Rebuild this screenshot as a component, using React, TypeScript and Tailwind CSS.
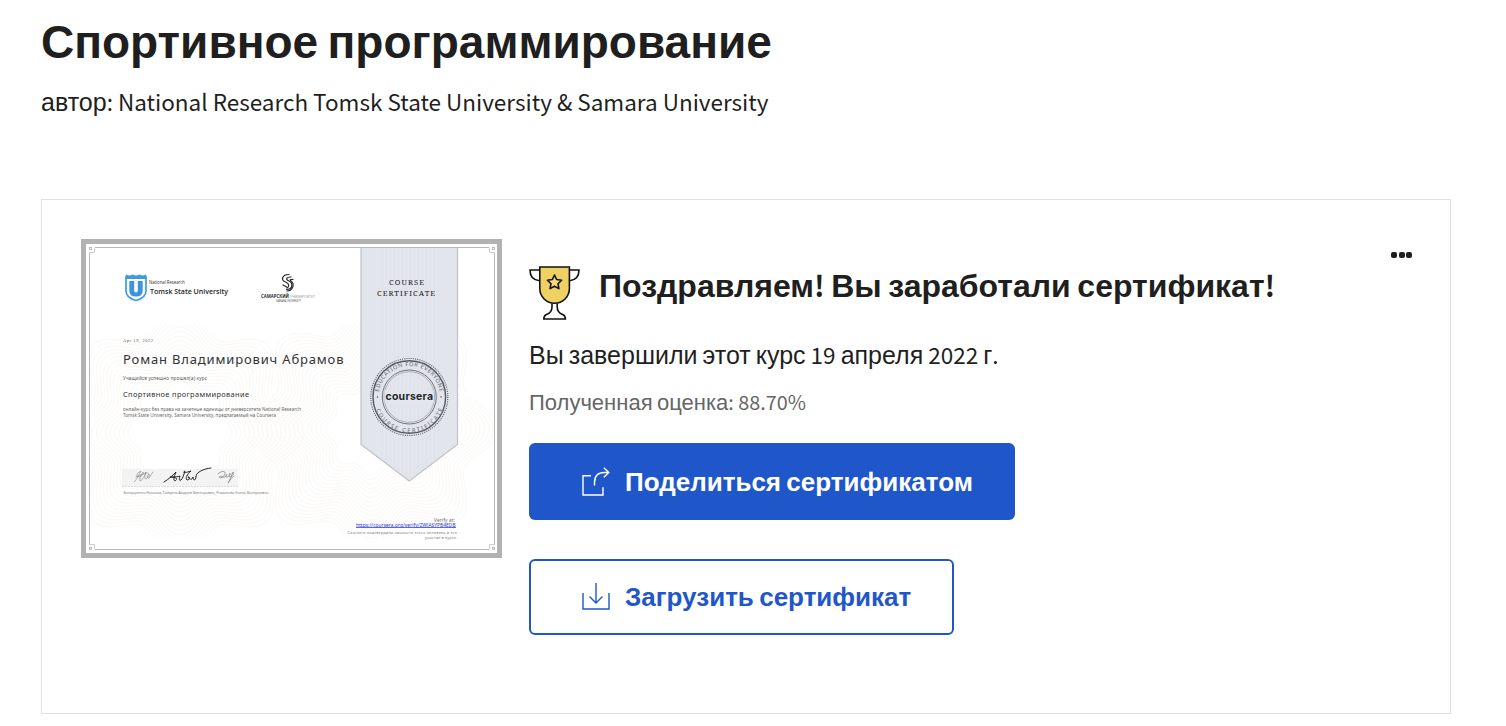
import React from "react";

const LATIN = "font-['Noto_Sans_CJK_SC',sans-serif] text-[0.9em] leading-none";

function Mixed({ text }: { text: string }) {
  const runs = text.match(/[А-Яа-яЁё]+|[^А-Яа-яЁё]+/g) ?? [];
  return (
    <>
      {runs.map((run, i) =>
        /[А-Яа-яЁё]/.test(run) ? (
          <React.Fragment key={i}>{run}</React.Fragment>
        ) : (
          <span key={i} className={LATIN}>
            {run}
          </span>
        ),
      )}
    </>
  );
}

function rosette(cx: number, cy: number, r: number, lobes: number, amp: number) {
  const pts: string[] = [];
  for (let i = 0; i <= 180; i++) {
    const a = (i / 180) * Math.PI * 2;
    const d = r + amp * Math.cos(lobes * a);
    pts.push(`${(cx + d * Math.cos(a)).toFixed(1)} ${(cy + d * Math.sin(a)).toFixed(1)}`);
  }
  return `M${pts.join("L")}Z`;
}

const CONTOURS = [
  ...Array.from({ length: 17 }, (_, i) => rosette(99, 194, 48 + i * 4, 8, 4 + i * 0.5)),
  ...Array.from({ length: 19 }, (_, i) => rosette(290, 190, 42 + i * 4, 8, 4 + i * 0.5)),
];

function Certificate() {
  return (
    <svg width="421" height="319" viewBox="0 0 421 319" className="block shrink-0" fontFamily="'Noto Sans', sans-serif">
      <defs>
        <clipPath id="sheet">
          <rect x="9" y="85" width="405" height="214" />
        </clipPath>
        <path id="arcTop" d="M297.3 158a31 31 0 0 1 62 0" />
        <path id="arcBottom" d="M292.8 158a35.5 35.5 0 0 0 71 0" />
      </defs>
      <rect x="2.5" y="2.5" width="416" height="314" fill="#fff" stroke="#b2b2b2" strokeWidth="5" />
      <g clipPath="url(#sheet)" fill="none" stroke="#fbf9f6" strokeWidth="1">
        {CONTOURS.map((d, i) => (
          <path key={i} d={d} />
        ))}
      </g>
      <path d="M14 8.5H408M413.5 14V306M408 310.5H14M8.5 306V14" fill="none" stroke="#b9b9b9" />
      <path d="M8.5 13.5h5v-5M408.500 8.500v5h5M413.500 305.500h-5v5M13.500 310.500v-5h-5" fill="none" stroke="#cfcfcf" />
      <g fill="none" stroke="#b5b5b5" strokeWidth=".9">
        <rect x="8.500" y="8.500" width="2" height="2" />
        <rect x="411.500" y="8.500" width="2" height="2" />
        <rect x="8.500" y="308.500" width="2" height="2" />
        <rect x="411.500" y="308.500" width="2" height="2" />
      </g>

      <path d="M280 9H376.500V205.500L328.300 242 280 205.500Z" fill="#e2e5ec" />
      <path
        d="M301.500 9V220M305.500 9V223M309.500 9V226M313.500 9V229M317.500 9V232M321.500 9V235M325.500 9V238M329.500 9V239M333.500 9V236M337.500 9V233M341.500 9V230M345.500 9V227M349.500 9V224M353.500 9V221M357.500 9V218"
        stroke="#dde1e9"
        strokeWidth=".8"
      />
      <path d="M280 9V205.500L328.300 242 376.500 205.500V9" fill="none" stroke="#c0c2c6" strokeWidth="1.200" />

      <g fontFamily="'Noto Serif', 'Liberation Serif', serif" fontSize="7.500" fill="#222">
        <text x="308" y="46" textLength="35">COURSE</text>
        <text x="296" y="56.500" textLength="58">CERTIFICATE</text>
      </g>

      <g fill="none" stroke="#55585c">
        <circle cx="328.300" cy="158" r="38.500" strokeWidth="1.100" strokeDasharray="1 1.200" />
        <circle cx="328.300" cy="158" r="36.300" strokeWidth="1.400" />
        <circle cx="328.300" cy="158" r="27" strokeWidth=".8" />
        <circle cx="328.300" cy="158" r="25.300" strokeWidth=".6" stroke="#8b8e92" />
      </g>
      <g fontSize="5.600" fill="#5b5e62">
        <text>
          <textPath href="#arcTop" startOffset="5" textLength="87">EDUCATION FOR EVERYONE</textPath>
        </text>
        <text>
          <textPath href="#arcBottom" startOffset="13" textLength="86">COURSE CERTIFICATE</textPath>
        </text>
        <circle cx="296.500" cy="158" r=".8" />
        <circle cx="360" cy="158" r=".8" />
      </g>
      <rect x="303.500" y="151" width="49" height="13" fill="#e2e5ec" />
      <text x="304.500" y="161" fontFamily="Inter, sans-serif" fontWeight="700" fontSize="10.500" fill="#26282b" textLength="47.500">
        coursera
      </text>

      <path d="M45 37.500h20v14c0 5-4 8.500-10 10-6-1.500-10-5-10-10Z" fill="#fff" stroke="#3f9bdc" strokeWidth="1.700" />
      <path d="M45 35.500l3.500 1.200 3-1.200 3.500 1.200 3.500-1.200 3 1.200 3.500-1.200V40H45Z" fill="#3f9bdc" />
      <path d="M48.300 42H53.200V51.500q0 2 1.800 2 1.800 0 1.800-2V42H61.700V52q0 5.500-6.700 5.500T48.300 52Z" fill="#3f93d8" />
      <text x="68" y="44.500" fontSize="4.400" fill="#333" fontFamily="'Open Sans', sans-serif" textLength="36">
        National Research
      </text>
      <text x="69" y="55" fontSize="7.800" fontWeight="600" fill="#252525" fontFamily="'Open Sans', sans-serif" textLength="78" lengthAdjust="spacingAndGlyphs">
        Tomsk State University
      </text>

      <g fill="none" stroke="#292929" strokeWidth="1.200" strokeLinecap="round">
        <path d="M208 35.500c-7 0-8.500 5.500-3.500 7.500 4 1.600 4 4.500 1.500 6" />
        <path d="M210 38c-5-.2-5.500 2.500-2.500 3.800 5 2.200 4.500 8.200-2 8.700" />
        <path d="M212 40.500c-3-.2-3.500.5-2 1.500 4 3 2 9.500-4 10" />
        <path d="M202 46c1.500 1 2.500 1.200 3.500 2" />
      </g>
      <text x="180" y="58.800" fontSize="4.300" fontWeight="700" fill="#333" textLength="28" lengthAdjust="spacingAndGlyphs">САМАРСКИЙ</text>
      <text x="209" y="58.800" fontSize="4.300" fill="#999" textLength="25" lengthAdjust="spacingAndGlyphs">УНИВЕРСИТЕТ</text>
      <text x="195" y="62.600" fontSize="2.800" fill="#555" textLength="25" lengthAdjust="spacingAndGlyphs">SAMARA UNIVERSITY</text>

      <text x="42" y="102.800" fontSize="4.300" fill="#555" fontFamily="'Liberation Serif', serif" textLength="30">Apr 19, 2022</text>
      <text x="42" y="125.200" fontSize="13" fill="#333" textLength="220.500">Роман Владимирович Абрамов</text>
      <text x="42" y="141" fontSize="4.600" fill="#555" textLength="84">Учащийся успешно прошел(а) курс</text>
      <text x="42" y="158" fontSize="7.400" fill="#333" textLength="126">Спортивное программирование</text>
      <g fontSize="4.500" fill="#666">
        <text x="42" y="171.700" textLength="178">онлайн-курс без права на зачетные единицы от университета National Research</text>
        <text x="42" y="178.200" textLength="153">Tomsk State University, Samara University, предлагаемый на Coursera</text>
      </g>

      <rect x="41" y="230" width="116" height="17.500" fill="#f3f3f3" />
      <path d="M41 247.500H157" stroke="#d4d4d4" strokeDasharray="2 1" strokeWidth=".8" />
      <g fill="none" strokeLinecap="round" strokeLinejoin="round">
        <path
          d="M53 243c3-2 5-8 7-11-4 2-6 5-2 6 3-1 6-4 4-5-2 3-4 7-3 9 3-1 5-6 6-9-1 3-2 7 0 7 2-1 4-4 3-5-2 1-2 5 0 4l4-6m-17 5c4-2 9-4 12-4"
          stroke="#8e8e8e"
          strokeWidth=".7"
        />
        <path
          d="M83 243c5-3 8-6 12-10-2 5-3 8-1 9 3-2 2-4-5-4 5 0 8 0 10-1-1 3-1 5 1 4 2-2 3-6 4-9-2 1-3 3 6 0-4 3-6 8-4 9 3 0 3-4 1-3 2 3 4 3 5 0 0 4 3 4 3-1 1-4 7-7 15-8"
          stroke="#222"
          strokeWidth="1"
        />
        <path
          d="M137 235c4-4 8-3 7 0-1 3-5 5-6 3 2-2 4 1 6 0 3-2 2-4 1-1 0 3 4 0 4-3 1 2-2 4 0 4 3-1 4-4 3-5-2 5-4 10-5 11 3-4 4-6 6-7"
          stroke="#888"
          strokeWidth=".8"
        />
      </g>
      <text x="42.500" y="254.700" fontSize="4.100" fill="#8a8a8a" textLength="145">
        Бондаренко Наталья, Гайдель Андрей Викторович, Романова Елена Валерьевна
      </text>

      <text x="353" y="282.500" fontSize="4.600" fill="#666" textLength="21">Verify at:</text>
      <text x="275" y="287.700" fontSize="4.800" fill="#2432d4" textLength="99.500">https://coursera.org/verify/ZWJASYPB4EDB</text>
      <path d="M275 288.500H375" stroke="#4a55dc" strokeWidth=".9" />
      <text x="266.500" y="295" fontSize="3.800" fill="#777" textLength="109.500">Coursera подтвердила личность этого человека и его</text>
      <text x="344" y="300.300" fontSize="3.800" fill="#777" textLength="32">участие в курсе.</text>
    </svg>
  );
}

function Trophy() {
  return (
    <svg width="51" height="54" viewBox="0 0 51 54" className="block shrink-0" fill="none" stroke="#111" strokeWidth="1.600">
      <path d="M10.500 4H1c0 6 3 10.200 9.500 10.700M40.500 4H50c0 6-3 10.200-9.500 10.700" />
      <path d="M23 37.500v3.500c0 4-1.500 6-5.500 7.500-2 .8-2.700 2.500-2.700 4.500h21.600c0-2-.7-3.700-2.700-4.500-4-1.500-5.500-3.500-5.500-7.500v-3.500" />
      <path d="M10.800 1h29.600v21.500a14.800 14.800 0 0 1-29.600 0Z" fill="#efd163" />
      <path d="M25.500 9l2.100 4.500 5 .7-3.600 3.500.9 4.900-4.400-2.300-4.400 2.300.9-4.900-3.600-3.500 5-.7Z" fill="#f6dc78" strokeLinejoin="round" />
    </svg>
  );
}

function ShareIcon() {
  return (
    <svg width="29" height="30" viewBox="0 0 29 30" className="block shrink-0" fill="none" stroke="currentColor" strokeWidth="1.400">
      <path d="M9 8.700H1V28h20V20.300" />
      <path d="M12.500 18.500V15.500q0-10 10-10H27M21.800.7 26.800 5.500 21.800 10.300" />
    </svg>
  );
}

function DownloadIcon() {
  return (
    <svg width="29" height="30" viewBox="0 0 29 30" className="block shrink-0" fill="none" stroke="currentColor" strokeWidth="1.400">
      <path d="M1 11V27H27V11" />
      <path d="M14 1V21M7.500 14.500 14 21 20.500 14.500" />
    </svg>
  );
}

export default function App() {
  return (
    <main className="h-[726px] overflow-hidden bg-white pl-[41px] font-['Liberation_Sans',Arial,sans-serif] text-[#1f1f1f]">
      <h1 className="flex h-[84px] items-center whitespace-pre text-[46px] font-bold leading-none">
        <span><Mixed text="Спортивное программирование" /></span>
      </h1>
      <p className="h-[36px] whitespace-pre text-[25px] leading-[36px]">
        <Mixed text="автор: National Research Tomsk State University & Samara University" />
      </p>

      <section className="mt-[79px] flex h-[515px] w-[1410px] items-start border border-[#e1e1e1] pl-[39px] pr-[38px] pt-[39px]">
        <Certificate />
        <div className="ml-[27px] flex min-w-0 flex-1 flex-col items-start">
          <div className="mt-[27px] flex h-[54px] items-start gap-[19px]">
            <Trophy />
            <h2 className="h-[40px] whitespace-pre text-[32px] font-bold leading-[40px]">
              <Mixed text="Поздравляем! Вы заработали сертификат!" />
            </h2>
          </div>
          <p className="mt-[17px] h-[36px] whitespace-pre text-[25px] leading-[36px]">
            <Mixed text="Вы завершили этот курс 19 апреля 2022 г." />
          </p>
          <p className="mt-[14px] h-[32px] whitespace-pre text-[22px] leading-[32px] text-[#666]">
            <Mixed text="Полученная оценка: 88.70%" />
          </p>
          <button className="mt-[24px] flex h-[77px] w-[486px] items-center gap-[14px] rounded-[6px] bg-[#1f57cb] pl-[53px] text-white">
            <ShareIcon />
            <span className="whitespace-pre text-[26px] font-bold leading-[36px]">
              <Mixed text="Поделиться сертификатом" />
            </span>
          </button>
          <button className="mt-[39px] flex h-[76px] w-[425px] items-center gap-[14px] rounded-[6px] border-2 border-[#1f57cb] pl-[51px] text-[#1f57cb]">
            <DownloadIcon />
            <span className="whitespace-pre text-[26px] font-bold leading-[36px]">
              <Mixed text="Загрузить сертификат" />
            </span>
          </button>
        </div>
        <button aria-label="Ещё" className="mt-[13px] flex h-[6px] gap-[1px] text-[#1f1f1f]">
          <span className="size-[6px] rounded-[2px] bg-current" />
          <span className="ml-[0.5px] size-[6px] rounded-[2px] bg-current" />
          <span className="ml-[0.5px] size-[6px] rounded-[2px] bg-current" />
        </button>
      </section>
    </main>
  );
}
